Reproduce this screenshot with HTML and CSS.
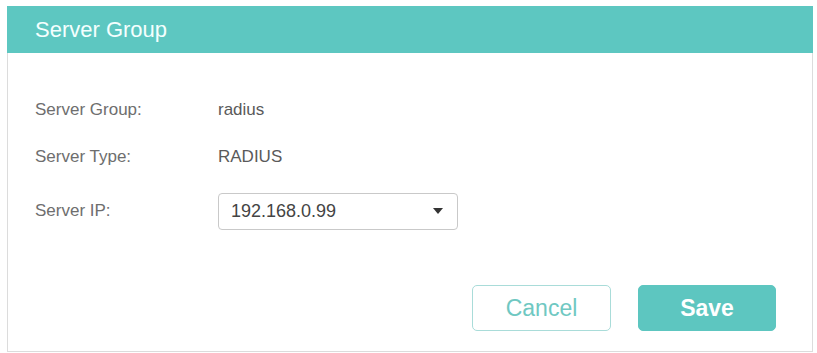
FILE: index.html
```html
<!DOCTYPE html>
<html>
<head>
<meta charset="utf-8">
<link rel="stylesheet" href="styles.css">
</head>
<body>
<div class="dialog">
  <div class="header">Server Group</div>
  <div class="body">
    <div class="row"><span class="label">Server Group:</span><span class="value">radius</span></div>
    <div class="row"><span class="label">Server Type:</span><span class="value">RADIUS</span></div>
    <div class="row row-select"><span class="label">Server IP:</span>
      <div class="select"><span class="select-text">192.168.0.99</span><span class="caret"></span></div>
    </div>
    <div class="actions">
      <button class="btn btn-cancel">Cancel</button>
      <button class="btn btn-save">Save</button>
    </div>
  </div>
</div>
</body>
</html>
```
FILE: styles.css
```css
html, body {
  margin: 0;
  padding: 0;
  background: #ffffff;
}
body {
  font-family: "Liberation Sans", Arial, sans-serif;
}
.dialog {
  margin: 6px 4px 0 7px;
  width: 806px;
  height: 346px;
  border: 1px solid #dcdcdc;
  border-top: none;
  box-sizing: border-box;
  display: flex;
  flex-direction: column;
}
.header {
  height: 47px;
  background: #5dc7c1;
  color: #f4fffe;
  font-size: 22px;
  line-height: 47px;
  padding-left: 28px;
  margin-left: -1px;
  margin-right: -1px;
}
.body {
  padding: 39px 36px 0 27px;
  display: flex;
  flex-direction: column;
}
.row {
  display: flex;
  align-items: center;
  height: 36px;
  margin-bottom: 11px;
}
.row-select {
  margin-top: 7px;
  margin-bottom: 0;
}
.label {
  width: 183px;
  font-size: 17px;
  color: #6e6e6e;
}
.value {
  font-size: 17px;
  color: #5a5a5a;
}
.select {
  width: 240px;
  height: 37px;
  box-sizing: border-box;
  border: 1px solid #c9c9c9;
  border-radius: 4px;
  display: flex;
  align-items: center;
  justify-content: space-between;
  padding: 0 14px 0 12px;
}
.select-text {
  font-size: 18px;
  color: #444444;
}
.caret {
  width: 0;
  height: 0;
  border-left: 5px solid transparent;
  border-right: 5px solid transparent;
  border-top: 6px solid #333333;
}
.actions {
  display: flex;
  justify-content: flex-end;
  gap: 27px;
  margin-top: 56px;
}
.btn {
  height: 46px;
  box-sizing: border-box;
  border-radius: 5px;
  font-family: "Liberation Sans", Arial, sans-serif;
  font-size: 23px;
  padding: 0;
  cursor: pointer;
}
.btn-cancel {
  width: 139px;
  background: #ffffff;
  border: 1px solid #a9dcd9;
  color: #6fc8c2;
}
.btn-save {
  width: 138px;
  background: #5dc6c0;
  border: 1px solid #5dc6c0;
  color: #ffffff;
  font-weight: bold;
}
```
